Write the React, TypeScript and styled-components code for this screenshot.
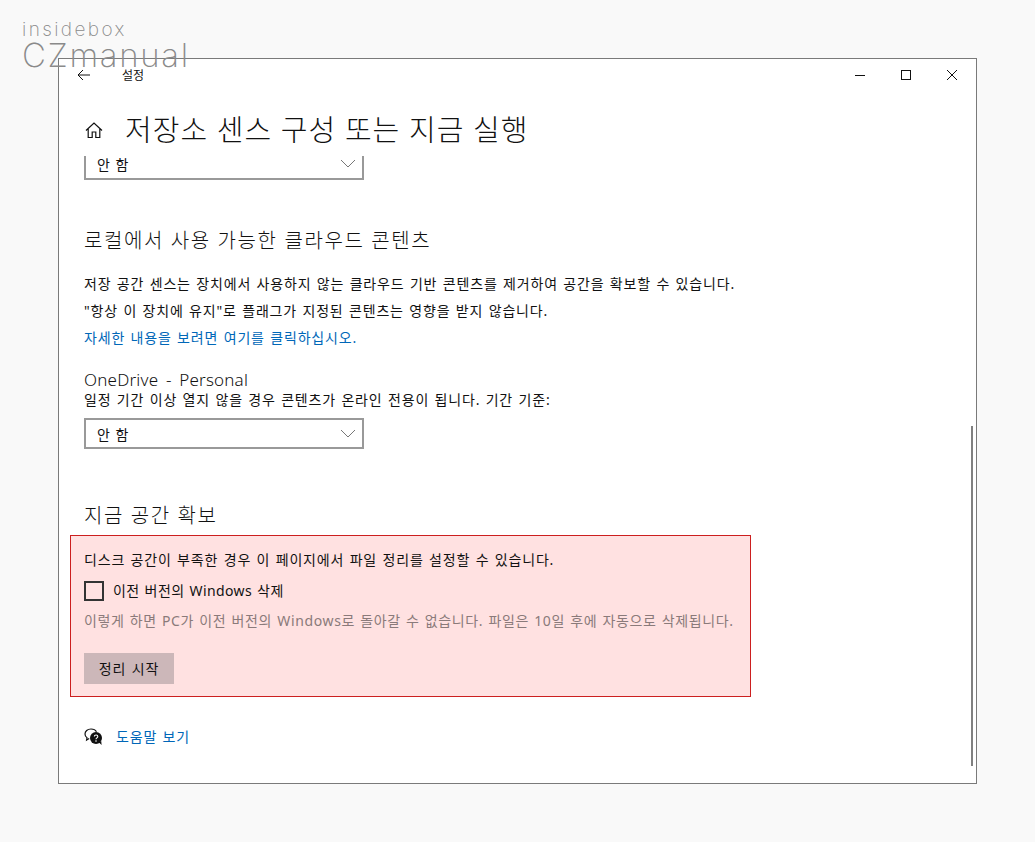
import React from 'react';
import styled, { createGlobalStyle } from 'styled-components';

const GlobalStyle = createGlobalStyle`
  html, body {
    margin: 0;
    padding: 0;
    background: #f9f9f9;
  }
  body {
    font-family: "Noto Sans", "Noto Sans CJK KR", sans-serif;
    color: #111;
  }
  * { box-sizing: border-box; }
`;

const Chevron = () => (
  <svg width="16" height="9" viewBox="0 0 16 9" fill="none" stroke="#777" strokeWidth="1">
    <path d="M1 1l7 7 7-7" />
  </svg>
);

export default function App() {
  return (
    <Page>
      <GlobalStyle />
      <Watermark>
        <span className="top">insidebox</span>
        <span className="bottom">CZmanual</span>
      </Watermark>
      <Window>
        <TitleBar>
          <BackButton>
            <svg width="14" height="12" viewBox="0 0 14 12" fill="none" stroke="#111" strokeWidth="1">
              <path d="M13 6H1M6 1L1 6l5 5" />
            </svg>
          </BackButton>
          <AppName>설정</AppName>
          <WindowControls>
            <ControlButton>
              <svg width="12" height="12" viewBox="0 0 12 12" stroke="#111" fill="none"><path d="M1 6.5h10" /></svg>
            </ControlButton>
            <ControlButton>
              <svg width="12" height="12" viewBox="0 0 12 12" stroke="#111" fill="none"><rect x="1.5" y="1.5" width="9" height="9" /></svg>
            </ControlButton>
            <ControlButton>
              <svg width="12" height="12" viewBox="0 0 12 12" stroke="#111" fill="none"><path d="M1 1l10 10M11 1L1 11" /></svg>
            </ControlButton>
          </WindowControls>
        </TitleBar>

        <PageHeader>
          <svg width="18" height="18" viewBox="0 0 18 18" fill="none" stroke="#111" strokeWidth="1.2">
            <path d="M1 9.5L9 2l8 7.5M3.2 8v8.5h4V11h3.6v5.5h4V8" />
          </svg>
          <PageTitle>저장소 센스 구성 또는 지금 실행</PageTitle>
        </PageHeader>

        <Content>
          <Select $clipped>
            <span>안 함</span>
            <Chevron />
          </Select>

          <SectionTitle $top={47}>로컬에서 사용 가능한 클라우드 콘텐츠</SectionTitle>
          <BodyText $top={19}>저장 공간 센스는 장치에서 사용하지 않는 클라우드 기반 콘텐츠를 제거하여 공간을 확보할 수 있습니다.</BodyText>
          <BodyText $top={8}>"항상 이 장치에 유지"로 플래그가 지정된 콘텐츠는 영향을 받지 않습니다.</BodyText>
          <LinkText $top={8}>자세한 내용을 보려면 여기를 클릭하십시오.</LinkText>

          <SubTitle>OneDrive - Personal</SubTitle>
          <BodyText $top={0}>일정 기간 이상 열지 않을 경우 콘텐츠가 온라인 전용이 됩니다. 기간 기준:</BodyText>
          <Select>
            <span>안 함</span>
            <Chevron />
          </Select>

          <SectionTitle $top={53}>지금 공간 확보</SectionTitle>

          <Highlight>
            <BodyText $top={0}>디스크 공간이 부족한 경우 이 페이지에서 파일 정리를 설정할 수 있습니다.</BodyText>
            <CheckRow>
              <CheckBox />
              <span>이전 버전의 Windows 삭제</span>
            </CheckRow>
            <MutedText>이렇게 하면 PC가 이전 버전의 Windows로 돌아갈 수 없습니다. 파일은 10일 후에 자동으로 삭제됩니다.</MutedText>
            <CleanButton>정리 시작</CleanButton>
          </Highlight>

          <HelpRow>
            <svg width="19" height="18" viewBox="0 0 19 18">
              <path d="M7 1C3.4 1 1 3.2 1 6c0 1.6.8 3 2 3.8L2.6 12l2.6-1.5" fill="none" stroke="#111" strokeWidth="1.2" />
              <path d="M7 1c2.6 0 4.6 1.1 5.5 2.8" fill="none" stroke="#111" strokeWidth="1.2" />
              <circle cx="12" cy="10" r="6" fill="#111" />
              <path d="M15 14.5l2.6 2.5-.4-4z" fill="#111" />
              <path d="M10.3 8.6c0-2.2 3.5-2.2 3.5 0 0 1.3-1.8 1.3-1.8 2.6" fill="none" stroke="#fff" strokeWidth="1.1" />
              <circle cx="12" cy="13" r=".8" fill="#fff" />
            </svg>
            <LinkText $top={0}>도움말 보기</LinkText>
          </HelpRow>
        </Content>
        <ScrollThumb />
      </Window>
    </Page>
  );
}

const Page = styled.div`
  position: relative;
  width: 1035px;
  height: 842px;
  padding: 58px 0 0 58px;
  overflow: hidden;
`;

const Watermark = styled.div`
  position: absolute;
  z-index: 2;
  left: 22px;
  top: 19px;
  display: flex;
  flex-direction: column;
  font-family: "Inter", sans-serif;
  font-weight: 200;
  color: #8a8a8a;
  pointer-events: none;

  .top {
    font-size: 19px;
    line-height: 22px;
    letter-spacing: 2.4px;
  }
  .bottom {
    font-size: 33px;
    line-height: 28px;
    letter-spacing: 1.65px;
  }
`;

const Window = styled.div`
  position: relative;
  width: 919px;
  height: 726px;
  background: #fff;
  border: 1px solid #7a7a7a;
  display: flex;
  flex-direction: column;
  overflow: hidden;
`;

const TitleBar = styled.div`
  height: 32px;
  display: flex;
  align-items: center;
  flex: none;
`;

const BackButton = styled.div`
  width: 63px;
  display: flex;
  justify-content: flex-start;
  padding-left: 18px;
`;

const AppName = styled.div`
  margin-top: 2px;
  font-size: 12px;
  line-height: 14px;
`;

const WindowControls = styled.div`
  margin-left: auto;
  display: flex;
  padding-right: 1px;
`;

const ControlButton = styled.div`
  width: 46px;
  height: 32px;
  display: flex;
  align-items: center;
  justify-content: center;
`;

const PageHeader = styled.div`
  height: 65px;
  padding: 13px 0 0 26px;
  display: flex;
  align-items: center;
  flex: none;
  gap: 22px;
`;

const PageTitle = styled.h1`
  margin: 0;
  font-size: 29px;
  font-weight: 300;
  line-height: 40px;
  letter-spacing: 1.05px;
  color: #111;
  white-space: nowrap;
`;

const Content = styled.div`
  flex: 1;
  padding-left: 25px;
  display: flex;
  flex-direction: column;
  align-items: flex-start;
`;

const Select = styled.div<{ $clipped?: boolean }>`
  width: 280px;
  height: ${(p) => (p.$clipped ? '24px' : '31px')};
  margin-top: ${(p) => (p.$clipped ? '0' : '9px')};
  border: 2px solid #999;
  border-top-width: ${(p) => (p.$clipped ? '0' : '2px')};
  display: flex;
  align-items: center;
  justify-content: space-between;
  padding: 0 6px ${(p) => (p.$clipped ? '7px' : '0')} 11px;
  font-size: 14px;
  word-spacing: 2px;
`;

const SectionTitle = styled.h2<{ $top: number }>`
  margin: ${(p) => p.$top}px 0 0;
  font-size: 20px;
  font-weight: 300;
  line-height: 28px;
  letter-spacing: 1.6px;
  color: #111;
`;

const SubTitle = styled.div`
  margin-top: 22px;
  font-size: 17px;
  font-weight: 300;
  line-height: 21px;
  letter-spacing: 0.2px;
  word-spacing: 3px;
`;

const BodyText = styled.p<{ $top: number }>`
  margin: ${(p) => p.$top}px 0 0;
  font-size: 14px;
  line-height: 19px;
  letter-spacing: 0.82px;
  word-spacing: 1px;
  white-space: nowrap;
`;

const LinkText = styled.div<{ $top: number }>`
  margin-top: ${(p) => p.$top}px;
  font-size: 14px;
  line-height: 19px;
  letter-spacing: 0.82px;
  word-spacing: 1px;
  color: #0067b8;
`;

const Highlight = styled.div`
  width: 681px;
  height: 162px;
  margin: 5px 0 0 -14px;
  padding: 14px 13px 0;
  background: #ffe1e1;
  border: 1px solid #cc1f1f;
  display: flex;
  flex-direction: column;
  align-items: flex-start;
`;

const CheckRow = styled.div`
  display: flex;
  align-items: center;
  gap: 9px;
  margin-top: 12px;
  font-size: 14px;
  line-height: 20px;
  letter-spacing: 0.4px;
  word-spacing: 1px;
`;

const CheckBox = styled.div`
  width: 20px;
  height: 20px;
  border: 2px solid #333;
`;

const MutedText = styled.p`
  margin: 10px 0 0;
  font-size: 14px;
  line-height: 19px;
  letter-spacing: 0.62px;
  word-spacing: 1px;
  color: #8a7a7a;
  white-space: nowrap;
`;

const CleanButton = styled.button`
  margin-top: 23px;
  width: 90px;
  height: 31px;
  border: 0;
  padding: 0 0 1px;
  background: #ccb7b9;
  color: #111;
  font-family: inherit;
  font-size: 14px;
  letter-spacing: 0.82px;
  word-spacing: 1px;
`;

const HelpRow = styled.div`
  margin-top: 30px;
  display: flex;
  align-items: center;
  gap: 13px;
`;

const ScrollThumb = styled.div`
  position: absolute;
  right: 3px;
  top: 367px;
  width: 2px;
  height: 340px;
  background: #808080;
`;
